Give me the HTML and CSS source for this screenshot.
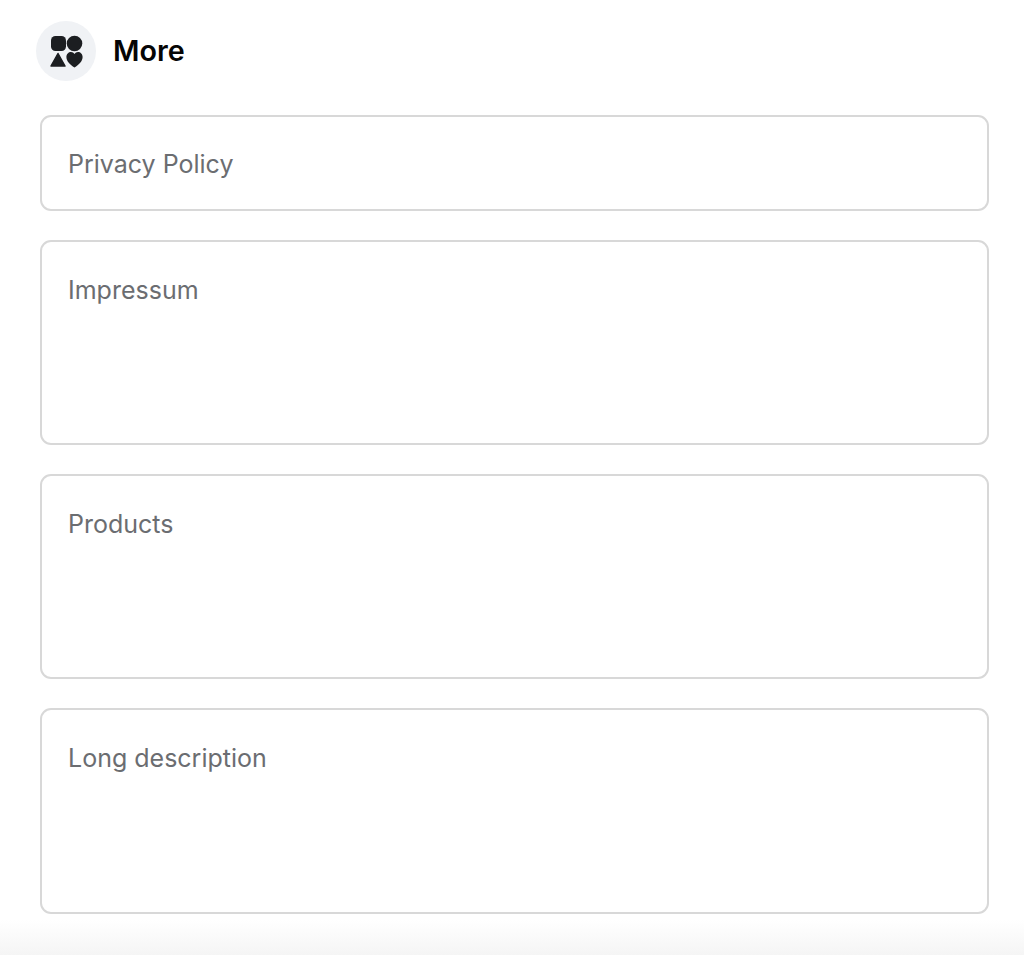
FILE: index.html
```html
<!DOCTYPE html>
<html lang="en">
<head>
  <meta charset="UTF-8">
  <meta name="viewport" content="width=device-width, initial-scale=1.0">
  <title>More</title>
  <link rel="stylesheet" href="styles.css">
</head>
<body>
  <div class="page">
    <div class="header">
      <div class="header-icon">
        <svg width="34" height="34" viewBox="0 0 34 34">
          <rect x="2" y="2" width="15" height="15" rx="4.5" fill="#1c1e21"/>
          <circle cx="25.5" cy="9.5" r="7.8" fill="#1c1e21"/>
          <path d="M9 19.5 L16 32 H2 Z" fill="#1c1e21" stroke="#1c1e21" stroke-width="1.5" stroke-linejoin="round"/>
          <path d="M25.5 33.6 C21 30.6 17.4 27.4 17.4 23 C17.4 20 19.6 18 22 18 C23.5 18 24.7 18.7 25.5 20 C26.3 18.7 27.5 18 29 18 C31.4 18 33.6 20 33.6 23 C33.6 27.4 30 30.6 25.5 33.6 Z" fill="#1c1e21"/>
        </svg>
      </div>
      <h2>More</h2>
    </div>
    <div class="fields">
      <div class="field">Privacy Policy</div>
      <div class="field tall">Impressum</div>
      <div class="field tall">Products</div>
      <div class="field tall">Long description</div>
    </div>
  </div>
  <div class="bottom-shade"></div>
</body>
</html>
```

FILE: styles.css
```css
html, body {
  height: 100%;
}
body {
  margin: 0;
  background: #fff;
  font-family: Inter, 'Noto Sans', sans-serif;
  display: flex;
  flex-direction: column;
  overflow: hidden;
}
.page {
  flex: 1;
  padding: 21px 35px 0 40px;
}
.header {
  display: flex;
  align-items: center;
  gap: 17px;
  margin-left: -4px;
  margin-bottom: 34px;
}
.header-icon {
  width: 60px;
  height: 60px;
  border-radius: 50%;
  background: #f0f2f5;
  display: flex;
  justify-content: center;
  align-items: center;
}
h2 {
  margin: 0 0 2px;
  font-size: 28.7px;
  font-weight: 600;
  color: #050505;
}
.fields {
  display: flex;
  flex-direction: column;
  gap: 29px;
}
.field {
  height: 96px;
  box-sizing: border-box;
  padding: 32px 26px 0;
  border: 2px solid #d8d8d8;
  border-radius: 11px;
  font-size: 25px;
  line-height: 30px;
  color: #6b6d71;
}
.field.tall {
  height: 205.2px;
  padding-top: 32.5px;
}
.bottom-shade {
  height: 35px;
  background: linear-gradient(to bottom, #fff, #f5f5f5);
}
```
